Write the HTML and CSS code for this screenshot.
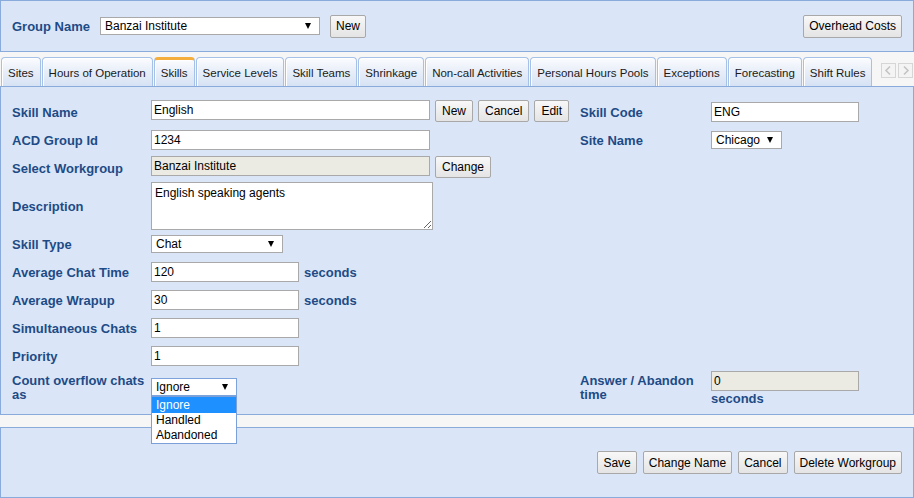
FILE: index.html
```html
<!DOCTYPE html>
<html>
<head>
<meta charset="utf-8">
<link rel="stylesheet" href="styles.css">
</head>
<body>
<div class="panel topbar">
  <span class="lbl group-lbl">Group Name</span>
  <div class="sel sel-group"><span>Banzai Institute</span><i class="caret"></i></div>
  <button class="btn btn-new">New</button>
  <div class="spacer"></div>
  <button class="btn">Overhead Costs</button>
</div>

<div class="tabstrip">
  <div class="tabs">
    <div class="tab">Sites</div>
    <div class="tab">Hours of Operation</div>
    <div class="tab active">Skills</div>
    <div class="tab">Service Levels</div>
    <div class="tab">Skill Teams</div>
    <div class="tab">Shrinkage</div>
    <div class="tab">Non-call Activities</div>
    <div class="tab">Personal Hours Pools</div>
    <div class="tab">Exceptions</div>
    <div class="tab">Forecasting</div>
    <div class="tab">Shift Rules</div>
  </div>
  <div class="tab-scroll">
    <span class="arrow"><svg width="13" height="13" viewBox="0 0 13 13"><path d="M8 2.5 L4 6.5 L8 10.5" fill="none" stroke="#c4c4c4" stroke-width="1.6"/></svg></span>
    <span class="arrow"><svg width="13" height="13" viewBox="0 0 13 13"><path d="M5 2.5 L9 6.5 L5 10.5" fill="none" stroke="#c4c4c4" stroke-width="1.6"/></svg></span>
  </div>
</div>

<div class="panel content">
  <div class="form">
    <div class="lbl l">Skill Name</div>
    <div class="f top">
      <input class="inp wide" value="English">
      <button class="btn sm">New</button>
      <button class="btn sm">Cancel</button>
      <button class="btn sm">Edit</button>
    </div>
    <div class="lbl rl r1">Skill Code</div>
    <div class="f rf r1"><input class="inp short" value="ENG"></div>

    <div class="lbl l">ACD Group Id</div>
    <div class="f"><input class="inp wide" value="1234"></div>
    <div class="lbl rl r2">Site Name</div>
    <div class="f rf r2"><div class="sel sel-site"><span>Chicago</span><i class="caret"></i></div></div>

    <div class="lbl l">Select Workgroup</div>
    <div class="f top">
      <input class="inp wide disabled" value="Banzai Institute" disabled>
      <button class="btn sm">Change</button>
    </div>

    <div class="lbl l">Description</div>
    <div class="f"><textarea class="ta">English speaking agents</textarea></div>

    <div class="lbl l">Skill Type</div>
    <div class="f"><div class="sel sel-type"><span>Chat</span><i class="caret"></i></div></div>

    <div class="lbl l">Average Chat Time</div>
    <div class="f"><input class="inp short" value="120"><span class="lbl">seconds</span></div>

    <div class="lbl l">Average Wrapup</div>
    <div class="f"><input class="inp short" value="30"><span class="lbl">seconds</span></div>

    <div class="lbl l">Simultaneous Chats</div>
    <div class="f"><input class="inp short" value="1"></div>

    <div class="lbl l">Priority</div>
    <div class="f"><input class="inp short" value="1"></div>

    <div class="lbl l multi">Count overflow chats as</div>
    <div class="f drop-cell">
      <div class="sel sel-overflow focus"><span>Ignore</span><i class="caret"></i></div>
      <ul class="dropdown">
        <li class="hl">Ignore</li>
        <li>Handled</li>
        <li>Abandoned</li>
      </ul>
    </div>
    <div class="lbl rl r10 multi">Answer / Abandon time</div>
    <div class="rf r10 stack">
      <input class="inp short disabled" value="0" disabled>
      <div class="lbl">seconds</div>
    </div>
  </div>
</div>

<div class="panel footer">
  <button class="btn">Save</button>
  <button class="btn">Change Name</button>
  <button class="btn">Cancel</button>
  <button class="btn">Delete Workgroup</button>
</div>
</body>
</html>
```

FILE: styles.css
```css
* { box-sizing: border-box; }
html, body { margin: 0; padding: 0; }
body {
  width: 914px;
  height: 498px;
  overflow: hidden;
  background: #f6f6f6;
  font-family: "Liberation Sans", Arial, sans-serif;
  font-size: 12px;
  color: #000;
}

.panel {
  background: #dae6f8;
  border: 1px solid #88abdc;
}

.lbl {
  font-weight: bold;
  font-size: 13px;
  color: #1e4b86;
  line-height: 15px;
}

/* top bar */
.topbar {
  height: 52px;
  display: flex;
  align-items: center;
  padding: 0 11px;
}
.group-lbl { width: 88px; }
.spacer { flex: 1; }
.btn-new { margin-left: 10px; padding: 0 6px; }

.btn {
  height: 23px;
  padding: 0 5px;
  border: 1px solid #a8a8a8;
  border-radius: 2px;
  background: linear-gradient(#f8f8f8, #e4e4e4);
  font-family: "Liberation Sans", Arial, sans-serif;
  font-size: 12px;
  color: #000;
  line-height: 20px;
}
.btn.sm { height: 22px; padding: 0 6px; }

/* selects */
.sel {
  height: 18px;
  border: 1px solid #a9a9a9;
  background: #fff;
  display: flex;
  align-items: center;
  justify-content: space-between;
  padding: 0 8px 0 4px;
  font-size: 12px;
  color: #000;
}
.caret {
  width: 0;
  height: 0;
  border-left: 3px solid transparent;
  border-right: 3px solid transparent;
  border-top: 6px solid #000;
}
.sel-group { width: 220px; }
.sel-site { width: 71px; }
.sel-type { width: 132px; }
.sel-overflow { width: 86px; }
.sel.focus { border-color: #7da3dc; }

/* tabs */
.tabstrip {
  height: 34px;
  display: flex;
  align-items: flex-end;
  padding-left: 1px;
}
.tabs {
  display: flex;
  align-items: flex-end;
  gap: 1px;
}
.tab {
  height: 29px;
  padding: 2px 6px 0;
  border: 1px solid #a6c1e7;
  border-bottom: none;
  border-radius: 4px 4px 0 0;
  background: linear-gradient(#fbfcfe, #e9eff9 45%, #d6e2f4);
  box-shadow: inset 1px 1px 0 #fff;
  display: flex;
  align-items: center;
  font-size: 11.5px;
  color: #1a1a1a;
  white-space: nowrap;
}
.tab.active {
  border-top: 3px solid #f5ad3c;
  padding-top: 0;
}
.tab-scroll {
  display: flex;
  gap: 2px;
  margin-left: 9px;
  margin-bottom: 8px;
}
.arrow {
  width: 15px;
  height: 15px;
  border: 1px solid #d6d6d6;
  background: #f4f4f4;
  display: flex;
  align-items: center;
  justify-content: center;
}

/* content */
.content {
  height: 329px;
  padding: 11px 11px 0 11px;
}
.form {
  display: grid;
  grid-template-columns: 139px 429px 131px 1fr;
  grid-template-rows: 28px 28px 28px 48px 28px 28px 28px 28px 28px auto;
}
.l { grid-column: 1; align-self: center; }
.f { grid-column: 2; display: flex; align-items: center; gap: 5px; }
.f.top { align-items: flex-start; padding-top: 2px; }
.rl { grid-column: 3; align-self: center; }
.rf { grid-column: 4; }
.r1 { grid-row: 1; }
.r2 { grid-row: 2; }
.r10 { grid-row: 10; }

.l.multi, .rl.multi {
  align-self: start;
  padding-top: 4px;
  line-height: 14px;
}

.inp {
  height: 20px;
  border: 1px solid #a9a9a9;
  padding: 0 2px;
  background: #fff;
  font-family: "Liberation Sans", Arial, sans-serif;
  font-size: 12px;
  color: #000;
  outline: none;
}
.inp.wide { width: 279px; }
.inp.short { width: 148px; }
.inp.disabled { background: #ebebe4; color: #000; }

.ta {
  width: 282px;
  height: 48px;
  border: 1px solid #a9a9a9;
  padding: 3px 3px;
  font-family: "Liberation Sans", Arial, sans-serif;
  font-size: 12px;
  color: #000;
  background: #fff;
  resize: both;
}

.drop-cell {
  grid-row: 10;
  align-self: start;
  align-items: flex-start;
  padding-top: 8px;
  position: relative;
}
.dropdown {
  position: absolute;
  top: 26px;
  left: 0;
  width: 86px;
  margin: 0;
  padding: 0;
  list-style: none;
  background: #fff;
  border: 1px solid #7b9fd8;
  font-size: 12px;
  z-index: 5;
}
.dropdown li {
  height: 15px;
  line-height: 15px;
  padding-left: 4px;
  color: #000;
}
.dropdown li.hl {
  height: 16px;
  line-height: 16px;
  background: #1e90ff;
  color: #fff;
}

.stack {
  align-self: start;
  padding-top: 1px;
  display: flex;
  flex-direction: column;
  align-items: flex-start;
}
.stack .lbl { line-height: 14px; margin-top: 1px; }

/* footer */
.footer {
  margin-top: 12px;
  height: 71px;
  display: flex;
  align-items: center;
  justify-content: flex-end;
  gap: 6px;
  padding: 0 11px;
}
```
